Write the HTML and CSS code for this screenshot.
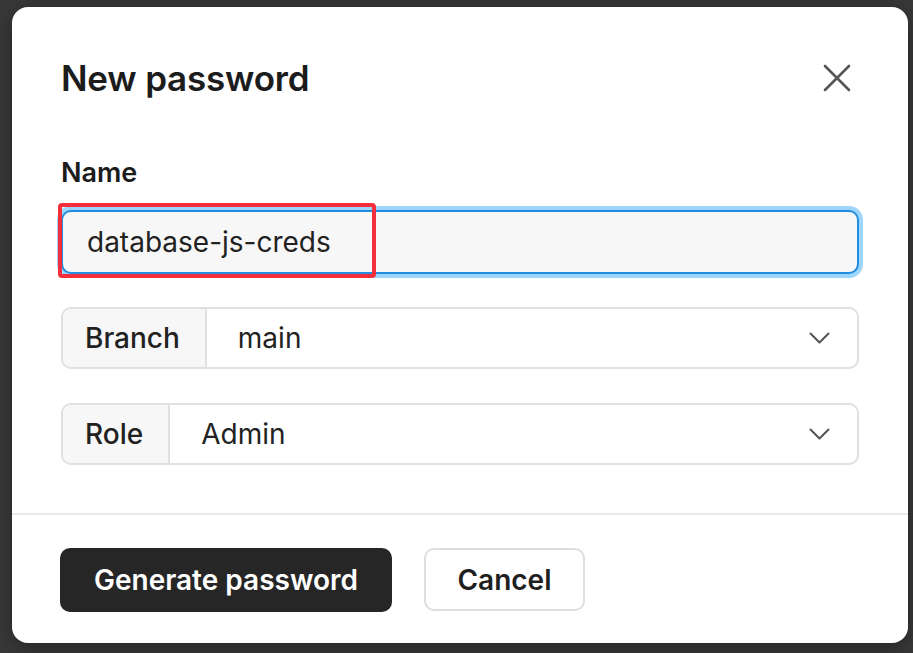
FILE: index.html
```html
<!DOCTYPE html>
<html lang="en">
<head>
<meta charset="utf-8">
<title>New password</title>
<link rel="stylesheet" href="styles.css">
</head>
<body>
<div class="modal">
  <div class="modal-body">
    <div class="header">
      <h1 class="title">New password</h1>
      <button class="close" aria-label="Close">
        <svg width="28" height="28" viewBox="0 0 28 28"><path d="M2 2 L26 26 M26 2 L2 26" stroke="#555" stroke-width="2.6" stroke-linecap="round" fill="none"/></svg>
      </button>
    </div>
    <label class="label">Name</label>
    <div class="input-wrap">
      <div class="input">database-js-creds</div>
      <div class="highlight"></div>
    </div>
    <div class="select">
      <div class="addon">Branch</div>
      <div class="value">main</div>
      <svg class="chev" width="21" height="12" viewBox="0 0 21 12"><path d="M1.5 1.5 L10.5 10.5 L19.5 1.5" stroke="#555" stroke-width="2" fill="none" stroke-linecap="round" stroke-linejoin="round"/></svg>
    </div>
    <div class="select">
      <div class="addon">Role</div>
      <div class="value">Admin</div>
      <svg class="chev" width="21" height="12" viewBox="0 0 21 12"><path d="M1.5 1.5 L10.5 10.5 L19.5 1.5" stroke="#555" stroke-width="2" fill="none" stroke-linecap="round" stroke-linejoin="round"/></svg>
    </div>
  </div>
  <div class="footer">
    <button class="btn btn-primary">Generate password</button>
    <button class="btn btn-secondary">Cancel</button>
  </div>
</div>
</body>
</html>
```

FILE: styles.css
```css
* { box-sizing: border-box; }
html, body { margin: 0; padding: 0; }
body {
  background: #383838;
  width: 913px;
  height: 653px;
  overflow: hidden;
  font-family: Inter, "Noto Sans", sans-serif;
  color: #1f1f1f;
}
.modal {
  margin: 7px 0 0 12px;
  width: 896px;
  height: 636px;
  background: #fff;
  border-radius: 16px;
  display: flex;
  flex-direction: column;
  box-shadow: 0 4px 20px rgba(0,0,0,0.35);
}
.modal-body {
  padding: 0 49px 0 49px;
  height: 508px;
  border-bottom: 2px solid #e8e8e8;
}
.header {
  display: flex;
  align-items: center;
  justify-content: space-between;
  height: 144px;
  padding-bottom: 2px;
}
.title {
  margin: 0;
  font-size: 35px;
  font-weight: 600;
  letter-spacing: -0.2px;
  color: #1c1c1c;
}
.close {
  border: 0;
  background: none;
  padding: 0;
  margin-right: 8px;
  width: 28px;
  height: 28px;
  display: flex;
}
.label {
  display: block;
  font-size: 27px;
  font-weight: 600;
  color: #1c1c1c;
  line-height: 32px;
  margin-top: 6px;
  margin-bottom: 21px;
}
.input-wrap {
  position: relative;
}
.input {
  height: 64px;
  border: 2px solid #1f8ee0;
  box-shadow: 0 0 0 4px #9dd5fb;
  border-radius: 10px;
  background: #f7f7f7;
  font-size: 28px;
  line-height: 60px;
  padding-left: 24px;
  color: #222;
}
.highlight {
  position: absolute;
  left: -3px;
  top: -7px;
  width: 318px;
  height: 75px;
  border: 4px solid #f32f3e;
  border-radius: 4px;
}
.select {
  margin-top: 33px;
  height: 62px;
  border: 2px solid #e0e0e0;
  border-radius: 10px;
  display: flex;
  align-items: center;
  overflow: hidden;
  font-size: 28px;
  color: #222;
}
.select + .select { margin-top: 34px; }
.addon {
  height: 100%;
  background: #f7f7f7;
  border-right: 2px solid #e0e0e0;
  padding: 0 25px 0 22px;
  display: flex;
  align-items: center;
  font-weight: 500;
}
.value {
  flex: 1;
  padding-left: 31px;
}
.chev {
  margin-right: 27px;
}
.footer {
  display: flex;
  gap: 32px;
  padding: 33px 48px 0 48px;
}
.btn {
  font-family: Inter, "Noto Sans", sans-serif;
  font-size: 28px;
  font-weight: 600;
  height: 64px;
  border-radius: 10px;
  padding: 0;
  cursor: pointer;
}
.btn-primary {
  background: #262626;
  color: #fff;
  border: 0;
  width: 332px;
}
.btn-secondary {
  background: #fff;
  color: #1f1f1f;
  border: 2px solid #dedede;
  width: 161px;
  height: 63px;
}
```
